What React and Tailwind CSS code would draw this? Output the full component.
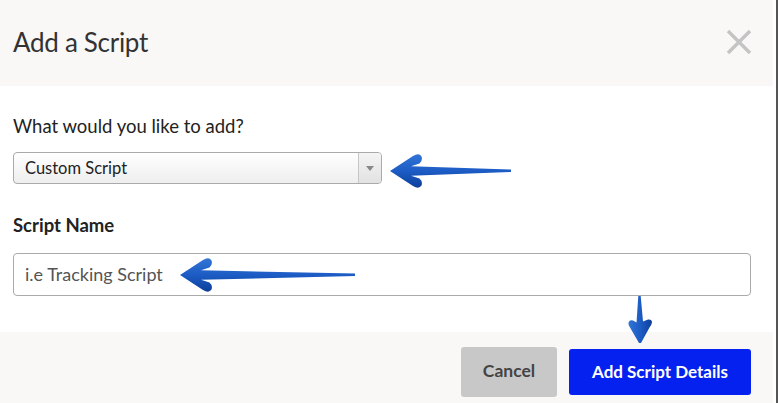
import React from "react";

function BlueArrow({ className, length = 122 }) {
  // arrow pointing left, tip at x=1; head ~33px tall
  const d = `M1,17 L24,2 Q30,-1.5 32.5,2.5 Q34,6.5 30.5,9.5 L22,12.3 L${length},15.6 L${length},18 L22,21.7 L30.5,24.5 Q34,27.5 32.5,31.5 Q30,35.5 24,32 Z`;
  return (
    <svg className={className} width={length + 2} height="34" viewBox={`0 0 ${length + 2} 34`}>
      <defs>
        <linearGradient id={`g${length}`} x1="0" y1="0" x2="0" y2="1">
          <stop offset="0" stopColor="#3274d6" />
          <stop offset="0.5" stopColor="#1c5cc4" />
          <stop offset="1" stopColor="#0d3f9c" />
        </linearGradient>
      </defs>
      <path d={d} fill={`url(#g${length})`} />
    </svg>
  );
}

function DownArrow({ className }) {
  return (
    <svg className={className} width="28" height="50" viewBox="0 0 28 50">
      <defs>
        <linearGradient id="gdown" x1="0" y1="0" x2="1" y2="0">
          <stop offset="0" stopColor="#3274d6" />
          <stop offset="0.5" stopColor="#1c5cc4" />
          <stop offset="1" stopColor="#0d3f9c" />
        </linearGradient>
      </defs>
      <path
        d="M12.3,1 L14.7,1 L17,26.5 L22,24.5 Q26,24 26,27.5 Q25.5,30 23.5,32.5 L15,48 L13,48 L4,32.5 Q2,29.5 2.5,27.5 Q3.5,24.5 7,25.5 L10.5,27.5 Z"
        fill="url(#gdown)"
      />
    </svg>
  );
}

export default function App() {
  const font = { fontFamily: "Lato, 'Open Sans', sans-serif" };
  return (
    <div className="flex w-[778px] h-[403px] bg-white overflow-hidden" style={font}>
      <div className="relative flex flex-col w-[773px] h-full">
        {/* header */}
        <div className="flex items-center justify-between h-[86px] bg-[#f9f8f6] pl-[13px] pr-[21px]">
          <h1 className="text-[26px] text-[#333] tracking-[-0.3px] leading-none pb-[2px]">
            Add a Script
          </h1>
          <svg width="26" height="26" viewBox="0 0 26 26" className="mt-[-2px]">
            <path d="M2,2 L24,24 M24,2 L2,24" stroke="#c4c4c4" strokeWidth="3.4" />
          </svg>
        </div>

        {/* body */}
        <div className="flex flex-col flex-1 px-[13px] pt-[28px]">
          <label className="text-[18.5px] text-[#222] leading-[24px]">
            What would you like to add?
          </label>
          <div className="mt-[14px] flex w-[369px] h-[32px] rounded-[4px] border border-[#aaa] bg-gradient-to-b from-white to-[#eeeeee] overflow-hidden">
            <div className="flex-1 flex items-center pl-[11px] text-[16.5px] text-[#222]">
              Custom Script
            </div>
            <div className="w-[23px] flex items-center justify-center border-l border-[#c6c6c6] bg-gradient-to-b from-[#f4f4f4] to-[#e2e2e2]">
              <svg width="8" height="5" viewBox="0 0 8 5">
                <path d="M0,0 L8,0 L4,5 Z" fill="#888" />
              </svg>
            </div>
          </div>

          <label className="mt-[29px] text-[18.5px] font-bold text-[#222] leading-[24px]">
            Script Name
          </label>
          <div className="mt-[16px] flex items-center w-[738px] h-[43px] rounded-[4px] border border-[#aaa] bg-white pl-[11px] text-[18px] text-[#555]">
            i.e Tracking Script
          </div>
        </div>

        {/* footer */}
        <div className="flex items-center justify-end gap-[12px] h-[71px] bg-[#f9f8f6] pt-[8px] pr-[22px]">
          <button className="w-[96px] h-[50px] rounded-[3px] bg-[#c8c8c8] text-[17.5px] font-bold text-[#444]">
            Cancel
          </button>
          <button className="w-[182px] h-[46px] rounded-[3px] bg-[#0521f0] text-[17px] font-bold text-white">
            Add Script Details
          </button>
        </div>

        {/* annotation arrows */}
        <BlueArrow className="absolute left-[389px] top-[154px]" length={122} />
        <BlueArrow className="absolute left-[179px] top-[258px]" length={176} />
        <DownArrow className="absolute left-[626px] top-[295px]" />
      </div>
      <div className="w-[3px]" />
      <div className="w-[2px] h-full bg-[#555]" />
    </div>
  );
}
